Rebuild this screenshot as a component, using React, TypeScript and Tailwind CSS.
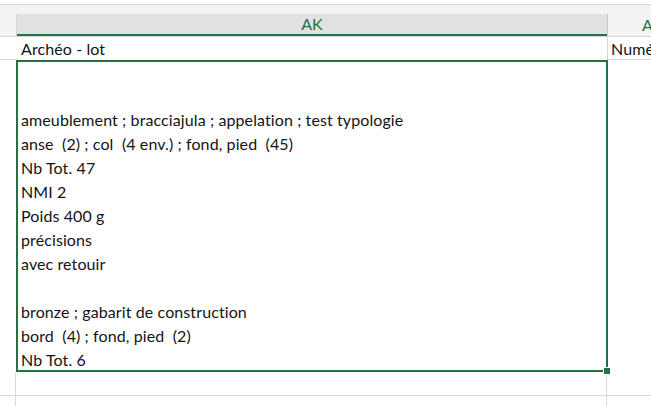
import React from 'react';

const lines = [
  '',
  '',
  'ameublement ; bracciajula ; appelation ; test typologie',
  'anse  (2) ; col  (4 env.) ; fond, pied  (45)',
  'Nb Tot. 47',
  'NMI 2',
  'Poids 400 g',
  'précisions',
  'avec retouir',
  '',
  'bronze ; gabarit de construction',
  'bord  (4) ; fond, pied  (2)',
  'Nb Tot. 6',
];

const App: React.FC = () => {
  return (
    <div className="w-[651px] h-[406px] overflow-hidden bg-white text-[#141414] font-['Lato','Liberation_Sans',sans-serif]">
      {/* top strip */}
      <div className="h-[5px] bg-white border-b border-[#d6d6d6]" />
      <div className="h-[9px] bg-[#f3f3f3]" />

      {/* column headers */}
      <div className="flex h-[23px] bg-[#f3f3f3] border-b border-[#d4d4d4]">
        <div className="w-[17px] shrink-0 border-r border-[#d4d4d4]" />
        <div className="w-[590px] shrink-0 bg-[#e1e1e1] border-b-2 border-[#217346] flex items-center justify-center text-[16px] text-[#217346]">
          AK
        </div>
        <div className="flex-1 border-l border-[#c6c6c6] text-[16px] text-[#217346] pl-[34px] leading-[22px] overflow-hidden">A</div>
      </div>

      {/* row 1 */}
      <div className="flex h-[23px]">
        <div className="w-[17px] shrink-0 bg-white border-b border-[#d9d9d9]" />
        <div className="w-[590px] shrink-0 pl-[4px] text-[16px] tracking-[0.1px] leading-[23px] whitespace-nowrap">Archéo - lot</div>
        <div className="flex-1 border-l border-[#d9d9d9] border-b pl-[3px] text-[16px] tracking-[0.1px] leading-[23px] whitespace-nowrap overflow-hidden">Numéro</div>
      </div>

      {/* big selected cell */}
      <div className="flex h-[312px]">
        <div className="w-[16px] shrink-0 bg-white" />
        <div className="relative w-[592px] shrink-0 border-2 border-[#217346] pl-[3px]">
          <div className="-mt-[2px]">
            {lines.map((l, i) => (
              <div key={i} className="h-[24px] text-[16px] tracking-[0.1px] leading-[24px] whitespace-pre">
                {l}
              </div>
            ))}
          </div>
          <div className="absolute -right-[5px] -bottom-[5px] w-[8px] h-[8px] bg-[#217346] border border-white" />
        </div>
        <div className="flex-1" />
      </div>

      {/* empty rows */}
      <div className="flex h-[24px] border-b border-[#dadada]">
        <div className="w-[16px] shrink-0 border-r border-[#dadada]" />
        <div className="w-[591px] shrink-0 border-r border-[#dadada]" />
        <div className="flex-1" />
      </div>
      <div className="flex h-[24px]">
        <div className="w-[16px] shrink-0 border-r border-[#dadada]" />
        <div className="w-[591px] shrink-0 border-r border-[#dadada]" />
        <div className="flex-1" />
      </div>
    </div>
  );
};

export default App;
